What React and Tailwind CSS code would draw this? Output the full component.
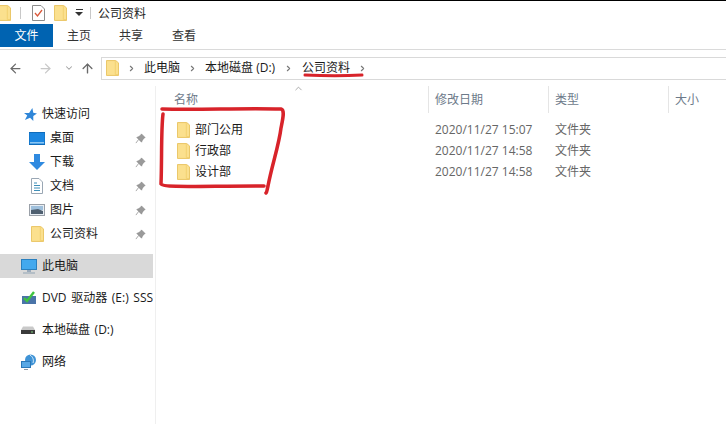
import { ArrowLeft, ArrowRight, ArrowUp, ChevronDown, ChevronRight, ChevronUp } from "lucide-react";

const font = { fontFamily: '"Open Sans", "Noto Sans CJK SC", sans-serif' };

const Folder = ({ className = "" }) => (
    <svg className={className} viewBox="0 0 14 17" width="13" height="16">
        <path d="M0.5 0.5H10.5L13.5 3V16.5H0.5Z" fill="#fbe08e" stroke="#e8c35e" />
        <path d="M10 1V15.5H13" fill="none" stroke="#f2cf6f" />
    </svg>
);

const Pin = () => (
    <svg viewBox="0 0 12 12" width="11" height="11" className="ml-auto mr-[3px]">
        <path d="M7 1L11 5L9.6 5.6L7.6 8.6L7.2 10L2 4.8L3.4 4.4L6.4 2.4ZM4 7L1 11" fill="#9a9a9a" stroke="#8a8a8a" strokeWidth="0.8" />
    </svg>
);

const Desktop = () => (
    <svg viewBox="0 0 16 13" width="16" height="13"><rect width="16" height="12" y="0.5" fill="#1b86e0" stroke="#0f6cbb" /><rect x="1" y="10" width="14" height="1.5" fill="#8cc6f2" /></svg>
);
const Download = () => (
    <svg viewBox="0 0 16 16" width="16" height="16"><path d="M5 0H11V8H16L8 16L0 8H5Z" fill="#2f8ae0" /></svg>
);
const Doc = () => (
    <svg viewBox="0 0 12 16" width="12" height="16"><path d="M0.5 0.5H8L11.5 4V15.5H0.5Z" fill="#fff" stroke="#9aa7b4" /><path d="M3 5H6M3 7.5H9M3 10H9M3 12.5H9" stroke="#3f8fb8" /></svg>
);
const Picture = () => (
    <svg viewBox="0 0 16 12" width="16" height="12"><rect x="0.5" y="0.5" width="15" height="11" fill="#e8eef4" stroke="#9aa0a8" /><rect x="2" y="2" width="12" height="4" fill="#9fc0dc" /><path d="M2 6L9 5L14 7V10H2Z" fill="#4e5f70" /></svg>
);
const Monitor = () => (
    <svg viewBox="0 0 16 15" width="16" height="15"><rect x="0.5" y="0.5" width="15" height="10" fill="#43a9ee" stroke="#2a80bf" /><path d="M6 11H10V13H6Z" fill="#9ab" /><path d="M2 14H14" stroke="#8fa3b3" /></svg>
);
const Dvd = () => (
    <svg viewBox="0 0 16 14" width="16" height="14"><path d="M1 5H15V13H1Z" fill="#4a74a8" /><path d="M3 7L6 10L13 1" fill="none" stroke="#3fc43f" strokeWidth="2.4" /></svg>
);
const Disk = () => (
    <svg viewBox="0 0 14 8" width="14" height="8"><path d="M2 0.5H12L14 4V8H0V4Z" fill="#c9c9c9" /><rect y="4" width="14" height="4" fill="#3a3a3a" /><rect x="10" y="5.5" width="2" height="1" fill="#7fd07f" /></svg>
);
const Network = () => (
    <svg viewBox="0 0 16 16" width="16" height="16"><circle cx="9.5" cy="6" r="5.5" fill="#3f93d6" /><path d="M9 1C12 3 13 6 12 9" stroke="#dbeefa" fill="none" /><rect x="0.5" y="7.5" width="9" height="6" fill="#57a8e6" stroke="#2a78b8" /><path d="M3 15.5H7" stroke="#8a9aa8" /></svg>
);

const NavItem = ({ icon, label, pin }) => (
    <div className="flex h-6 items-center pr-1 text-[12px] text-[#1a1a1a]">
        <div className="flex w-[50px] shrink-0 items-center justify-center pl-[24px]">{icon}</div>
        <span className="whitespace-nowrap">{label}</span>
        {pin && <Pin />}
    </div>
);

const RootItem = ({ icon, label, active, className = "" }) => (
    <div className={`flex h-6 items-center overflow-hidden text-[12px] text-[#1a1a1a] ${active ? "bg-[#d9d9d9]" : ""} ${className}`}>
        <div className="flex w-[42px] shrink-0 items-center justify-start pl-[21px]">{icon}</div>
        <span className="whitespace-nowrap [word-spacing:1.5px]">{label}</span>
    </div>
);

const rows = [
    { name: "部门公用", date: "2020/11/27 15:07" },
    { name: "行政部", date: "2020/11/27 14:58" },
    { name: "设计部", date: "2020/11/27 14:58" },
];

const Sep = ({ className = "mx-[8px]" }) => <ChevronRight size={9} strokeWidth={3} className={`${className} text-[#777]`} />;

export default function App() {
    return (
        <div className="relative flex h-[424px] w-[726px] flex-col overflow-hidden border-t border-black bg-white" style={font}>
            {/* title bar */}
            <div className="flex h-[23px] items-center text-[12px] text-[#222]">
                <Folder className="ml-[-2px]" />
                <div className="ml-[9px] h-3 w-px bg-[#c8c8c8]" />
                <svg viewBox="0 0 13 16" width="13" height="16" className="ml-[11px]">
                    <path d="M0.5 0.5H9L12.5 4V15.5H0.5Z" fill="#fff" stroke="#8c8c8c" />
                    <path d="M3 8L5.5 11L10 5" fill="none" stroke="#d9583a" strokeWidth="1.3" />
                </svg>
                <Folder className="ml-[9px]" />
                <div className="ml-[8px] flex flex-col items-center">
                    <div className="mb-[2px] h-px w-[7px] bg-[#333]" />
                    <div className="h-0 w-0 border-x-[4px] border-t-[4px] border-x-transparent border-t-[#333]" />
                </div>
                <div className="ml-[7px] h-3 w-px bg-[#c8c8c8]" />
                <span className="ml-[7px] mt-[2px]">公司资料</span>
            </div>

            {/* ribbon tabs */}
            <div className="flex h-[26px] items-start border-b border-[#dadada] text-[12px] text-[#333]">
                <div className="flex h-[23px] w-[53px] items-center justify-center bg-[#0063b1] text-white">文件</div>
                <div className="flex h-[23px] items-center">
                    <span className="ml-[14px]">主页</span>
                    <span className="ml-[28px]">共享</span>
                    <span className="ml-[29px]">查看</span>
                </div>
            </div>

            {/* address row */}
            <div className="flex h-[36px] items-center">
                <ArrowLeft size={15} strokeWidth={2} className="ml-[8px] text-[#6a6a6a]" />
                <ArrowRight size={15} strokeWidth={2} className="ml-[15px] text-[#c8c8c8]" />
                <ChevronDown size={10} strokeWidth={2.5} className="ml-[11px] text-[#a0a0a0]" />
                <ArrowUp size={15} strokeWidth={2.2} className="ml-[6px] text-[#6a6a6a]" />
                <div className="ml-[6px] flex h-[23px] flex-1 items-center border border-r-0 border-[#d9d9d9] pl-[4px] text-[12px] text-[#1a1a1a]">
                    <Folder />
                    <Sep />
                    <span>此电脑</span>
                    <Sep />
                    <span>本地磁盘 (D:)</span>
                    <Sep className="mx-[9px]" />
                    <span>公司资料</span>
                    <Sep className="mx-[8px]" />
                </div>
            </div>

            <div className="flex flex-1">
                {/* sidebar */}
                <div className="w-[156px] shrink-0 border-r border-[#efefef] pr-[2px] pt-[16px]">
                    <div className="flex h-6 items-center text-[12px] text-[#1a1a1a]">
                        <svg viewBox="0 0 14 14" width="13" height="13" className="ml-[24px] mr-[5px]">
                            <path d="M9 0L10 5L14 6L10 8.5L10 14L6.5 10.5L1 13L3.5 8L0 5.5H5.5Z" fill="#2f86d8" />
                        </svg>
                        快速访问
                    </div>
                    <NavItem icon={<Desktop />} label="桌面" pin />
                    <NavItem icon={<Download />} label="下载" pin />
                    <NavItem icon={<Doc />} label="文档" pin />
                    <NavItem icon={<Picture />} label="图片" pin />
                    <NavItem icon={<Folder />} label="公司资料" pin />
                    <RootItem icon={<Monitor />} label="此电脑" active className="mt-[8px]" />
                    <RootItem icon={<Dvd />} label="DVD 驱动器 (E:) SSS" className="mt-[8px]" />
                    <RootItem icon={<Disk />} label="本地磁盘 (D:)" className="mt-[8px]" />
                    <RootItem icon={<Network />} label="网络" className="mt-[8px]" />
                </div>

                {/* file list */}
                <div className="relative flex-1">
                    <ChevronUp size={11} strokeWidth={1.5} className="absolute left-[137px] top-[-3px] text-[#888]" />
                    <div className="flex h-[27px] items-center text-[12px] text-[#6d7a8a]">
                        <div className="h-full w-[272px] pl-[18px] pt-[5px]">名称</div>
                        <div className="h-full w-[120px] border-l border-[#e5e5e5] pl-[6px] pt-[5px]">修改日期</div>
                        <div className="h-full w-[120px] border-l border-[#e5e5e5] pl-[6px] pt-[5px]">类型</div>
                        <div className="h-full flex-1 border-l border-[#e5e5e5] pl-[6px] pt-[5px]">大小</div>
                    </div>
                    <div className="pt-[6px]">
                        {rows.map((row) => (
                            <div key={row.name} className="flex h-[21px] items-center text-[12px] text-[#666]">
                                <div className="flex w-[273px] items-center pl-[21px] text-[#1a1a1a]">
                                    <Folder />
                                    <span className="ml-[5px]">{row.name}</span>
                                </div>
                                <div className="w-[120px] pl-[6px]">{row.date}</div>
                                <div className="pl-[6px]">文件夹</div>
                            </div>
                        ))}
                    </div>
                </div>
            </div>

            {/* red marker annotations */}
            <svg className="pointer-events-none absolute left-0 top-[-1px]" width="726" height="424" fill="none" stroke="#d8232a" strokeLinecap="round" strokeLinejoin="round">
                <path d="M305 75C325 76 345 76 362 75" strokeWidth="3" />
                <path d="M162 109C200 110 240 108 281 109C285 110 283 118 281 128C279 145 272 165 268 186C267 190 267 192 266 193" strokeWidth="3.5" />
                <path d="M163 114C161 130 162 160 161 184C163 188 200 186 264 186" strokeWidth="3.5" />
            </svg>
        </div>
    );
}
